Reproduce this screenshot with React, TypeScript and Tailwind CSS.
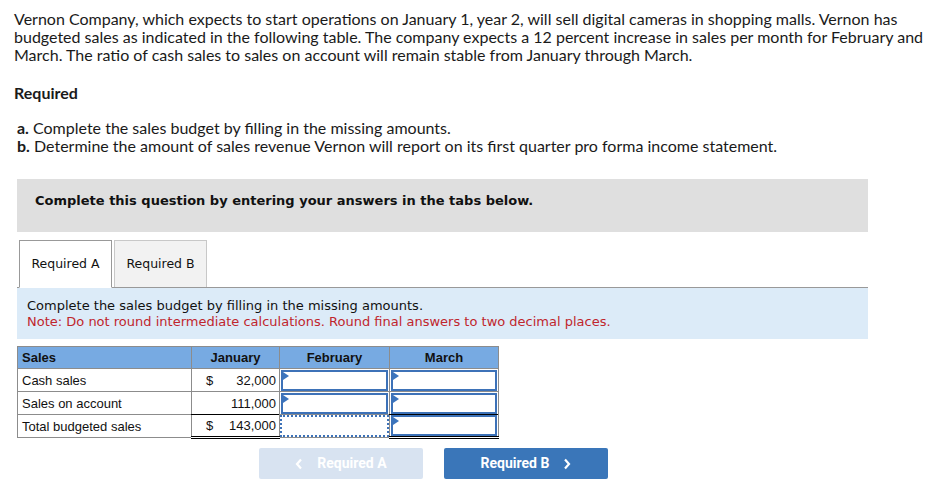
import React from "react";

const Flag = () => (
  <span className="absolute left-0 top-0 w-0 h-0 border-t-[4px] border-b-[4px] border-l-[6px] border-t-transparent border-b-transparent border-l-[#3b74bd]" />
);

function InputCell({ total }: { total?: boolean }) {
  return (
    <td className={`p-0 border-x border-[#8c8c8c] h-[23px] ${total ? "border-t border-t-black border-b-[3px] border-b-black border-double" : "border-b border-b-[#8c8c8c]"}`}>
      <div className="relative h-[21px] mx-[1px] border-2 border-[#3d72b8] bg-white">
        <Flag />
      </div>
    </td>
  );
}

export default function App() {
  return (
    <div className="w-[945px] h-[492px] bg-white overflow-hidden text-[#1a1a1a]">
      <div className="pl-[14px] pr-[12px] pt-[10px] font-['Lato',sans-serif] text-[16px] leading-[18px]">
        <p>
          Vernon Company, which expects to start operations on January 1, year 2, will sell digital cameras in shopping malls. Vernon has budgeted sales as indicated in the following table. The company expects a 12 percent increase in sales per month for February and March. The ratio of cash sales to sales on account will remain stable from January through March.
        </p>
        <p className="mt-[20px] font-bold">Required</p>
        <div className="mt-[17px] pl-[3px]">
          <p>
            <span className="font-bold">a.</span> Complete the sales budget by filling in the missing amounts.
          </p>
          <p>
            <span className="font-bold">b.</span> Determine the amount of sales revenue Vernon will report on its first quarter pro forma income statement.
          </p>
        </div>
      </div>

      <div className="ml-[17px] w-[851px] mt-[24px] h-[53px] bg-[#dfdfdf] pt-[12px] pl-[18px] font-['DejaVu_Sans',sans-serif] text-[13px] font-bold text-[#111]">
        Complete this question by entering your answers in the tabs below.
      </div>

      <div className="ml-[17px] w-[851px] mt-[8px] flex items-end border-b border-[#999] h-[48px] font-['DejaVu_Sans',sans-serif] text-[12.5px] text-[#111]">
        <div className="ml-[2px] w-[93px] h-[48px] -mb-px bg-white border border-[#999] border-b-white flex items-center justify-center">
          Required A
        </div>
        <div className="ml-[2px] w-[93px] h-[47px] bg-[#f2f2f2] border border-[#c8c8c8] border-b-0 flex items-center justify-center">
          Required B
        </div>
      </div>

      <div className="ml-[17px] w-[851px] h-[51px] bg-[#dcebf8] pt-[10px] pl-[10px] font-['DejaVu_Sans',sans-serif] text-[13px] leading-[16px]">
        <p className="text-[#111]">Complete the sales budget by filling in the missing amounts.</p>
        <p className="text-[#c0262d]">Note: Do not round intermediate calculations. Round final answers to two decimal places.</p>
      </div>

      <table className="ml-[17px] mt-[7px] border-collapse font-['Liberation_Sans',sans-serif] text-[13px] leading-[15px] text-[#111] table-fixed">
        <colgroup>
          <col className="w-[174px]" />
          <col className="w-[88px]" />
          <col className="w-[110px]" />
          <col className="w-[109px]" />
        </colgroup>
        <thead>
          <tr className="bg-[#77aae2] h-[22px]">
            <th className="border border-[#8c8c8c] text-left pl-[4px] font-bold">Sales</th>
            <th className="border border-[#8c8c8c] text-center font-bold">January</th>
            <th className="border border-[#8c8c8c] text-center font-bold">February</th>
            <th className="border border-[#8c8c8c] text-center font-bold">March</th>
          </tr>
        </thead>
        <tbody>
          <tr className="h-[23px]">
            <td className="border border-[#8c8c8c] pl-[4px]">Cash sales</td>
            <td className="border border-[#8c8c8c] px-[3px]">
              <div className="flex justify-between pl-[11px]">
                <span>$</span>
                <span>32,000</span>
              </div>
            </td>
            <InputCell />
            <InputCell />
          </tr>
          <tr className="h-[23px]">
            <td className="border border-[#8c8c8c] pl-[4px]">Sales on account</td>
            <td className="border border-[#8c8c8c] px-[3px] text-right">111,000</td>
            <InputCell />
            <InputCell />
          </tr>
          <tr className="h-[23px]">
            <td className="border border-[#8c8c8c] pl-[4px]">Total budgeted sales</td>
            <td className="border-x border-[#8c8c8c] border-t border-t-black border-b-[3px] border-b-black border-double px-[3px]">
              <div className="flex justify-between pl-[11px]">
                <span>$</span>
                <span>143,000</span>
              </div>
            </td>
            <td className="p-0 border-x border-[#8c8c8c] border-b border-b-[#8c8c8c]">
              <div className="h-[22px] border-2 border-dotted border-[#3d72b8] bg-white" />
            </td>
            <InputCell total />
          </tr>
        </tbody>
      </table>

      <div className="mt-[9px] flex gap-[21px] pl-[259px] font-['Roboto',sans-serif] text-[14px] font-bold text-white">
        <div className="w-[164px] h-[31px] rounded-[2px] bg-[#d8e3f1] flex items-center justify-center gap-[14px]">
          <svg width="8" height="12" viewBox="0 0 8 12" fill="none" stroke="white" strokeWidth="2.2">
            <path d="M6 1.5 L2 6 L6 10.5" />
          </svg>
          <span>Required A</span>
        </div>
        <div className="w-[164px] h-[31px] rounded-[2px] bg-[#3a76b9] flex items-center justify-center gap-[14px]">
          <span>Required B</span>
          <svg width="8" height="12" viewBox="0 0 8 12" fill="none" stroke="white" strokeWidth="2.2">
            <path d="M2 1.5 L6 6 L2 10.5" />
          </svg>
        </div>
      </div>
    </div>
  );
}
